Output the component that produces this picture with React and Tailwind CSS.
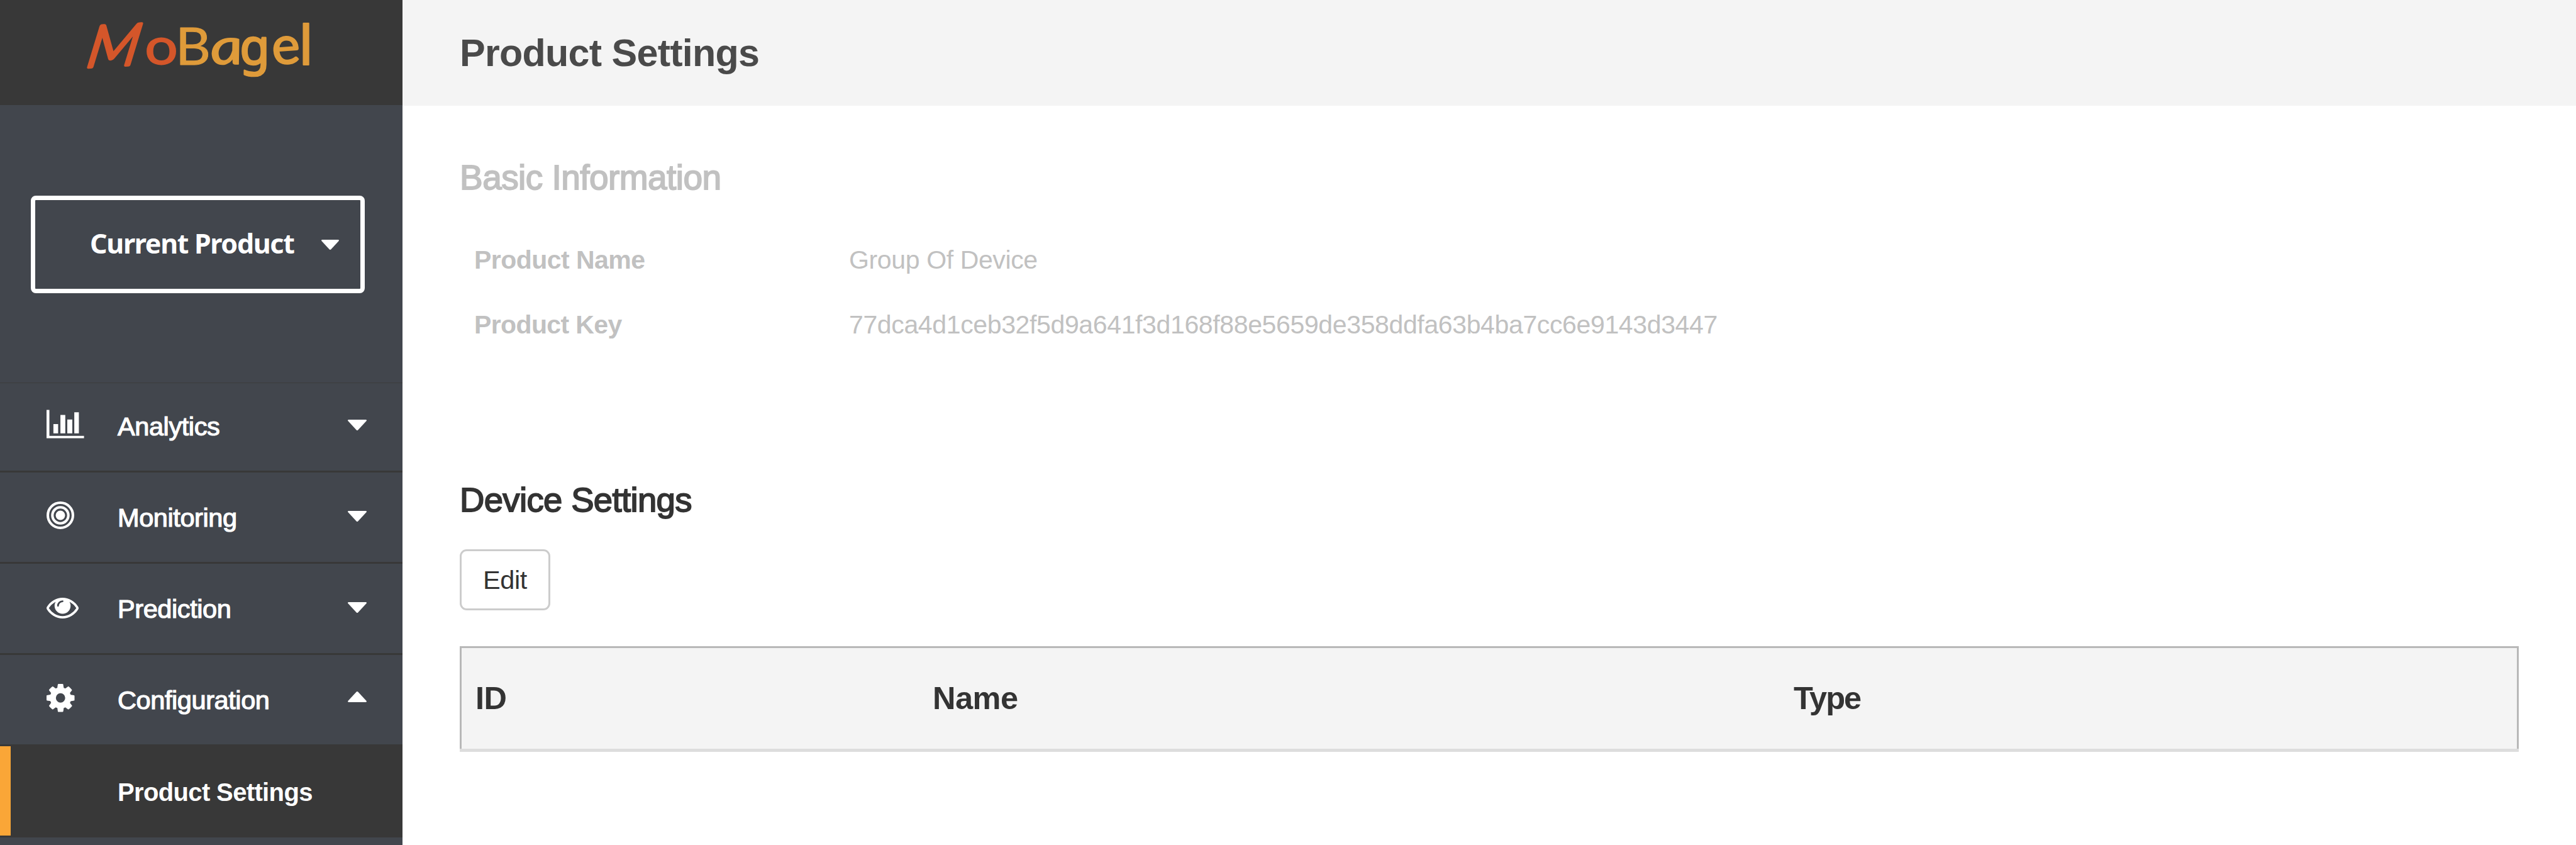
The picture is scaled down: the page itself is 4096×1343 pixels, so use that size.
const LOGO_LETTERS = [
  { ch: "M", fill: "#d4562a", t: "translate(-16 408) rotate(-3) skewX(-20) scale(1.13 1.12)", size: 350, sw: 24, cls: "font-['Lato',sans-serif] font-light" },
  { ch: "o", fill: "#d4562a", t: "translate(413 389) scale(1.13 0.98)", size: 360, sw: 8, cls: "font-['Lato',sans-serif]" },
  { ch: "B", fill: "#df9b3a", t: "translate(627 394) scale(1.055 1)", size: 360, sw: 4, cls: "font-['Lato',sans-serif]" },
  { ch: "a", fill: "#df9b3a", t: "translate(883 389) skewX(8) scale(1.24 0.98)", size: 360, sw: 7, cls: "font-['Lato',sans-serif] italic" },
  { ch: "g", fill: "#df9b3a", t: "translate(1076 389) scale(1.07 1.08)", size: 318, sw: 11, cls: "font-['Noto_Sans',sans-serif]" },
  { ch: "e", fill: "#df9b3a", t: "translate(1306 391) rotate(-4) scale(1.04 1.02)", size: 360, sw: 9, cls: "font-['Lato',sans-serif]" },
  { ch: "l", fill: "#df9b3a", t: "translate(1490 392) scale(1.12 1.09)", size: 360, sw: 8, cls: "font-['Lato',sans-serif]" },
];

function Logo() {
  return (
    <svg
      viewBox="0 90 1570 425"
      className="ml-[136px] mt-[34px] h-[97px] w-[358px] overflow-visible"
      role="img"
      aria-label="MoBagel"
    >
      {LOGO_LETTERS.map((l) => (
        <text
          key={l.ch}
          className={l.cls}
          transform={l.t}
          fill={l.fill}
          stroke={l.fill}
          strokeWidth={l.sw}
          strokeLinejoin="round"
          fontSize={l.size}
        >
          {l.ch}
        </text>
      ))}
    </svg>
  );
}

function Caret({ up = false, className }) {
  return (
    <svg viewBox="0 0 30 17" preserveAspectRatio="none" className={className} fill="#fff">
      <path
        d={
          up
            ? "M1 17h28q1.600-.8.600-2L16.200.6q-1.200-1-2.400 0L.4 15q-1 1.200.6 2z"
            : "M1 0h28q1.600.8.600 2L16.200 16.400q-1.200 1-2.400 0L.4 2q-1-1.200.6-2z"
        }
      />
    </svg>
  );
}

function ChartIcon() {
  return (
    <svg viewBox="0 0 262 200" className="mt-[45px] h-[45.500px] w-[59.600px]" fill="#fff">
      <path d="M0 2h20v182h242v16H0z" />
      <path d="M48 101h33v65H48zM97 37h34v129H97zM145 69h35v97h-35zM194 19h32v147h-32z" />
    </svg>
  );
}

function TargetIcon() {
  return (
    <svg viewBox="0 0 194 194" className="mt-[46px] size-[44px]" fill="none" stroke="#fff">
      <circle cx="97" cy="97" r="88" strokeWidth="18" />
      <circle cx="97" cy="97" r="56" strokeWidth="18" />
      <circle cx="97" cy="97" r="33" fill="#fff" stroke="none" />
    </svg>
  );
}

function EyeIcon() {
  return (
    <svg viewBox="0 384 1792 1152" className="mt-[54px] h-[33px] w-[51px]" fill="#fff">
      <path d="M1664 960q-152-236-381-353 61 104 61 225 0 185-131.500 316.500t-316.500 131.500-316.500-131.500-131.500-316.500q0-121 61-225-229 117-381 353 133 205 333.500 326.500t434.500 121.500 434.500-121.500 333.500-326.500zm-720-384q0-20-14-34t-34-14q-125 0-214.500 89.500t-89.500 214.500q0 20 14 34t34 14 34-14 14-34q0-86 61-147t147-61q20 0 34-14t14-34zm848 384q0 34-20 69-140 230-376.500 368.500t-499.500 138.500-499.500-139-376.500-368q-20-35-20-69t20-69q140-229 376.500-368t499.500-139 499.500 139 376.500 368q20 35 20 69z" />
    </svg>
  );
}

function CogIcon() {
  return (
    <svg viewBox="128 128 1536 1536" className="mt-[46px] size-[44.500px]" fill="#fff">
      <path d="M1152 896q0-106-75-181t-181-75-181 75-75 181 75 181 181 75 181-75 75-181zm512-109v222q0 12-8 23t-20 13l-185 28q-19 54-39 91 35 50 107 138 10 12 10 25t-9 23q-27 37-99 108t-94 71q-12 0-26-9l-138-108q-44 23-91 38-16 136-29 186-7 28-36 28h-222q-14 0-24.500-8.500t-11.500-21.500l-28-184q-49-16-90-37l-141 107q-10 9-25 9-14 0-25-11-126-114-165-168-7-10-7-23 0-12 8-23 15-21 51-66.500t54-70.500q-27-50-41-99l-183-27q-13-2-21-12.500t-8-23.500v-222q0-12 8-23t19-13l186-28q14-46 39-92-40-57-107-138-10-12-10-24 0-10 9-23 26-36 98.500-107.500t94.500-71.500q13 0 26 10l138 107q44-23 91-38 16-136 29-186 7-28 36-28h222q14 0 24.500 8.500t11.500 21.500l28 184q49 16 90 37l142-107q9-9 24-9 13 0 25 10 129 119 165 170 7 8 7 22 0 12-8 23-15 21-51 66.500t-54 70.500q26 50 41 98l183 28q13 2 21 12.500t8 23.500z" />
    </svg>
  );
}

const MENU = [
  { label: "Analytics", Icon: ChartIcon, caret: "mt-[61px]" },
  { label: "Monitoring", Icon: TargetIcon, caret: "mt-[61px]" },
  { label: "Prediction", Icon: EyeIcon, caret: "mt-[61px]" },
  { label: "Configuration", Icon: CogIcon, caret: "mt-[58px]", open: true },
];

function MenuRow({ label, Icon, caret, open }) {
  return (
    <a className="flex h-[145px] items-start border-b-[3px] border-[#383838]">
      <span className="ml-[74px] w-[113px] shrink-0">
        <Icon />
      </span>
      <span className="mt-[51px] w-[366px] text-[41.500px] leading-none tracking-[-0.010em] text-white [-webkit-text-stroke:1.2px_white]">
        {label}
      </span>
      <span className={caret}>
        <Caret up={open} className="h-[17px] w-[30px]" />
      </span>
    </a>
  );
}

function Sidebar() {
  return (
    <aside className="flex h-full w-[640px] shrink-0 flex-col bg-[#42464d]">
      <div className="h-[167px] shrink-0 overflow-hidden bg-[#383838]">
        <Logo />
      </div>
      <div className="h-[442px] shrink-0 border-b border-[#3b3c3d] pl-[49px] pt-[144px]">
        <button className="flex h-[155px] w-[531px] items-start rounded-[8px] border-[7px] border-white pl-[87px] text-white">
          <span className="mt-[47px] w-[368px] whitespace-nowrap text-left font-['Noto_Sans','Open_Sans',sans-serif] text-[43px] font-bold leading-none tracking-[-0.031em]">
            Current Product
          </span>
          <Caret className="mt-[63px] h-[16px] w-[28px]" />
        </button>
      </div>
      <nav className="-mt-[3px] flex flex-col">
        {MENU.map((m) => (
          <MenuRow key={m.label} {...m} />
        ))}
        <a className="flex h-[145px] items-start border-b-[3px] border-[#383838] bg-[#383838]">
          <span className="h-full w-[17px] bg-[#faa637]" />
          <span className="ml-[170px] mt-[52.500px] whitespace-nowrap text-[40px] font-bold leading-none tracking-[-0.016em] text-white">
            Product Settings
          </span>
        </a>
      </nav>
    </aside>
  );
}

export default function App() {
  return (
    <div className="flex h-[1343px] w-[4096px] overflow-hidden bg-white font-['Liberation_Sans',Arial,sans-serif]">
      <Sidebar />
      <main className="flex min-w-0 flex-1 flex-col">
        <header className="h-[168px] shrink-0 bg-[#f4f4f4] pl-[91px] pt-[53.500px]">
          <h1 className="text-[61px] font-bold leading-none tracking-[-0.012em] text-[#4a4a4a]">
            Product Settings
          </h1>
        </header>

        <section className="h-[600px] shrink-0 pl-[91px] pt-[87px] text-[#c1c1c1]">
          <h2 className="h-[55px] text-[55px] leading-none tracking-[-0.010em] [-webkit-text-stroke:1.8px_#c1c1c1]">
            Basic Information
          </h2>
          <dl className="mt-[83px] grid grid-cols-[596px_1fr] gap-y-[61.500px] pl-[23px] text-[41px] leading-none tracking-[-0.009em]">
            <dt className="font-bold tracking-[-0.013em]">Product Name</dt>
            <dd>Group Of Device</dd>
            <dt className="font-bold tracking-[-0.015em]">Product Key</dt>
            <dd>77dca4d1ceb32f5d9a641f3d168f88e5659de358ddfa63b4ba7cc6e9143d3447</dd>
          </dl>
        </section>

        <section className="flex flex-col items-start pl-[91px] text-[#333]">
          <h2 className="h-[105px] text-[54.500px] leading-none tracking-[-0.012em] [-webkit-text-stroke:1.8px_#333]">
            Device Settings
          </h2>
          <button className="h-[97px] w-[144px] rounded-[11px] border-[3px] border-[#ccc] bg-white pt-px text-[41.500px] leading-none tracking-[-0.009em]">
            Edit
          </button>
          <div className="mt-[57px] w-[3274px] border-b-[5px] border-[#ddd]">
            <div className="grid h-[163px] grid-cols-[727px_1369px_1fr] items-start border-x-[3px] border-t-[3px] border-[#b8b8b8] bg-[#f4f4f4] pt-[54.500px] text-[50.500px] font-bold leading-none tracking-[-0.010em]">
              <span className="pl-[22px]">ID</span>
              <span className="pl-[22px]">Name</span>
              <span className="pl-[22px] tracking-[-0.040em]">Type</span>
            </div>
          </div>
        </section>
      </main>
    </div>
  );
}
